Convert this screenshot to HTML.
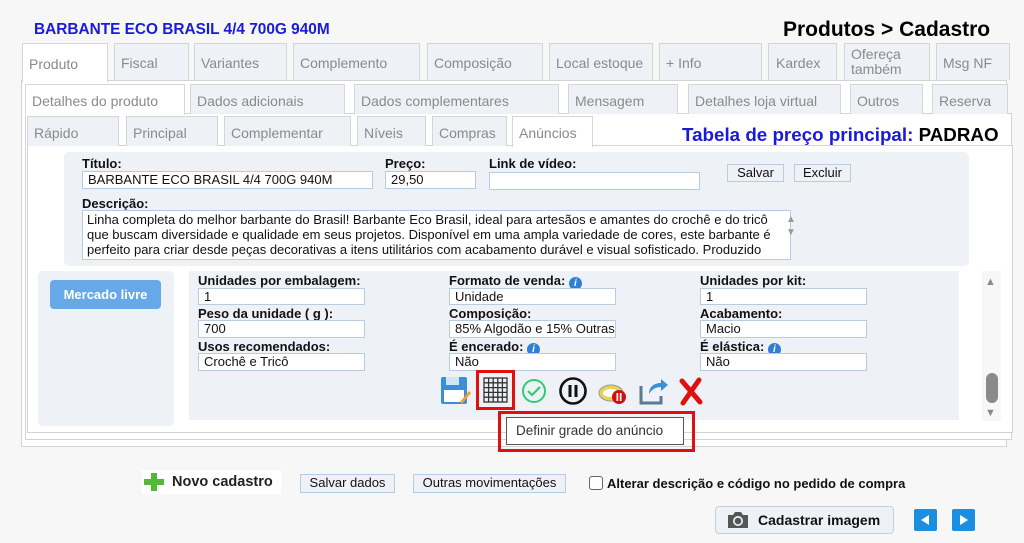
<!DOCTYPE html>
<html><head><meta charset="utf-8"><style>
*{box-sizing:border-box;margin:0;padding:0}
body{width:1024px;height:543px;background:#f7f7f7;font-family:"Liberation Sans",Arial,sans-serif;position:relative;overflow:hidden;font-size:13px;color:#000}
.a{position:absolute}
.tab{position:absolute;border:1px solid #d6d6d6;border-bottom:none;background:#eef1f6;color:#8a8a8a;font-size:14px;padding-left:6px;padding-top:2px;display:flex;align-items:center}
.tab.on{background:#fff}
.box{position:absolute;border:1px solid #d3d3d3;background:#fff}
.lbl{position:absolute;font-weight:bold;font-size:13px;color:#111}
.inp{position:absolute;background:#fff;border:1px solid #b9cbe0;font-size:13px;padding-left:5px;line-height:15px;color:#111;white-space:nowrap;overflow:hidden}
.btn{position:absolute;background:#eef1f6;border:1px solid #b9cbe0;font-size:13px;text-align:center;line-height:16px;color:#111}
</style></head><body>
<div class="a" style="left:34px;top:21px;color:#1a1adb;font-weight:bold;font-size:15.4px">BARBANTE ECO BRASIL 4/4 700G 940M</div>
<div class="a" style="left:783px;top:18px;font-weight:bold;font-size:21px">Produtos &gt; Cadastro</div>

<div class="box" style="left:21px;top:80px;width:986px;height:367px"></div>
<div class="box" style="left:25px;top:113px;width:987px;height:327px"></div>
<div class="box" style="left:27px;top:145px;width:986px;height:288px"></div>

<div class="tab on" style="left:22px;top:43px;width:86px;height:39px">Produto</div>
<div class="tab" style="left:114px;top:43px;width:75px;height:37px">Fiscal</div>
<div class="tab" style="left:194px;top:43px;width:93px;height:37px">Variantes</div>
<div class="tab" style="left:293px;top:43px;width:127px;height:37px">Complemento</div>
<div class="tab" style="left:427px;top:43px;width:116px;height:37px">Composição</div>
<div class="tab" style="left:549px;top:43px;width:104px;height:37px">Local estoque</div>
<div class="tab" style="left:659px;top:43px;width:103px;height:37px">+ Info</div>
<div class="tab" style="left:768px;top:43px;width:69px;height:37px;padding-left:7px">Kardex</div>
<div class="tab" style="left:844px;top:43px;width:86px;height:37px;line-height:15px;padding-top:0">Ofereça<br>também</div>
<div class="tab" style="left:936px;top:43px;width:74px;height:37px">Msg NF</div>

<div class="tab on" style="left:25px;top:84px;width:160px;height:31px">Detalhes do produto</div>
<div class="tab" style="left:190px;top:84px;width:155px;height:30px">Dados adicionais</div>
<div class="tab" style="left:354px;top:84px;width:205px;height:30px">Dados complementares</div>
<div class="tab" style="left:568px;top:84px;width:110px;height:30px">Mensagem</div>
<div class="tab" style="left:688px;top:84px;width:153px;height:30px">Detalhes loja virtual</div>
<div class="tab" style="left:850px;top:84px;width:73px;height:30px">Outros</div>
<div class="tab" style="left:932px;top:84px;width:76px;height:30px">Reserva</div>

<div class="tab" style="left:27px;top:116px;width:92px;height:30px">Rápido</div>
<div class="tab" style="left:126px;top:116px;width:92px;height:30px">Principal</div>
<div class="tab" style="left:224px;top:116px;width:127px;height:30px">Complementar</div>
<div class="tab" style="left:357px;top:116px;width:69px;height:30px">Níveis</div>
<div class="tab" style="left:432px;top:116px;width:75px;height:30px">Compras</div>
<div class="tab on" style="left:512px;top:116px;width:81px;height:31px">Anúncios</div>
<div class="a" style="left:682px;top:124px;font-weight:bold;font-size:18.8px;color:#1a1adb">Tabela de preço principal: <span style="color:#000">PADRAO</span></div>

<div class="a" style="left:64px;top:152px;width:905px;height:114px;background:#eef1f6;border-radius:5px"></div>
<div class="lbl" style="left:82px;top:156px">Título:</div>
<div class="inp" style="left:82px;top:171px;width:291px;height:18px">BARBANTE ECO BRASIL 4/4 700G 940M</div>
<div class="lbl" style="left:385px;top:156px">Preço:</div>
<div class="inp" style="left:385px;top:171px;width:91px;height:18px">29,50</div>
<div class="lbl" style="left:489px;top:156px">Link de vídeo:</div>
<div class="inp" style="left:489px;top:172px;width:211px;height:18px"></div>
<div class="btn" style="left:727px;top:164px;width:57px;height:18px">Salvar</div>
<div class="btn" style="left:794px;top:164px;width:57px;height:18px">Excluir</div>
<div class="lbl" style="left:82px;top:196px">Descrição:</div>
<div class="inp" style="left:82px;top:210px;width:709px;height:50px;white-space:normal;line-height:15px;padding:1px 18px 0 4px;font-size:13px">Linha completa do melhor barbante do Brasil! Barbante Eco Brasil, ideal para artesãos e amantes do crochê e do tricô que buscam diversidade e qualidade em seus projetos. Disponível em uma ampla variedade de cores, este barbante é perfeito para criar desde peças decorativas a itens utilitários com acabamento durável e visual sofisticado. Produzido</div>
<div class="a" style="left:786px;top:213px;color:#999;font-size:10px;line-height:13px">▲<br>▼</div>

<div class="a" style="left:38px;top:271px;width:136px;height:155px;background:#eef1f6;border-radius:5px"></div>
<div class="a" style="left:50px;top:280px;width:111px;height:29px;background:#67a9e8;border-radius:4px;color:#fff;font-weight:bold;font-size:13px;text-align:center;line-height:29px">Mercado livre</div>

<div class="a" style="left:189px;top:271px;width:770px;height:149px;background:#eef1f6"></div>
<div class="lbl" style="left:198px;top:273px">Unidades por embalagem:</div>
<div class="inp" style="left:198px;top:288px;width:167px;height:17px">1</div>
<div class="lbl" style="left:198px;top:306px">Peso da unidade ( g ):</div>
<div class="inp" style="left:198px;top:320px;width:167px;height:18px">700</div>
<div class="lbl" style="left:198px;top:339px">Usos recomendados:</div>
<div class="inp" style="left:198px;top:353px;width:167px;height:18px">Crochê e Tricô</div>

<div class="lbl" style="left:449px;top:273px">Formato de venda: <span style="display:inline-block;width:13px;height:13px;border-radius:50%;background:#2f7fd6;color:#fff;font-size:10px;text-align:center;line-height:13px;font-style:italic;vertical-align:-1px">i</span></div>
<div class="inp" style="left:449px;top:288px;width:167px;height:17px">Unidade</div>
<div class="lbl" style="left:449px;top:306px">Composição:</div>
<div class="inp" style="left:449px;top:320px;width:167px;height:18px">85% Algodão e 15% Outras</div>
<div class="lbl" style="left:449px;top:339px">É encerado: <span style="display:inline-block;width:13px;height:13px;border-radius:50%;background:#2f7fd6;color:#fff;font-size:10px;text-align:center;line-height:13px;font-style:italic;vertical-align:-1px">i</span></div>
<div class="inp" style="left:449px;top:353px;width:167px;height:18px">Não</div>

<div class="lbl" style="left:700px;top:273px">Unidades por kit:</div>
<div class="inp" style="left:700px;top:288px;width:167px;height:17px">1</div>
<div class="lbl" style="left:700px;top:306px">Acabamento:</div>
<div class="inp" style="left:700px;top:320px;width:167px;height:18px">Macio</div>
<div class="lbl" style="left:700px;top:339px">É elástica: <span style="display:inline-block;width:13px;height:13px;border-radius:50%;background:#2f7fd6;color:#fff;font-size:10px;text-align:center;line-height:13px;font-style:italic;vertical-align:-1px">i</span></div>
<div class="inp" style="left:700px;top:353px;width:167px;height:18px">Não</div>

<svg class="a" style="left:440px;top:376px" width="32" height="30" viewBox="0 0 32 30"><rect x="1" y="1" width="26" height="27" rx="2" fill="#3a8fd6"/><rect x="6" y="1" width="13" height="8" fill="#cfe6f7"/><rect x="4" y="14" width="20" height="12" fill="#fff"/><path d="M20 26 L29 15 L31 17 L22 28 Z" fill="#f0a030"/></svg>
<div class="a" style="left:476px;top:370px;width:39px;height:40px;border:3px solid #e01010"></div>
<svg class="a" style="left:483px;top:377px" width="25" height="26" viewBox="0 0 25 26"><g stroke="#333" stroke-width="1.3" fill="none"><rect x="1" y="1" width="23" height="24"/><path d="M5.6 1V25M10.2 1V25M14.8 1V25M19.4 1V25M1 5.8H24M1 10.6H24M1 15.4H24M1 20.2H24"/></g></svg>
<svg class="a" style="left:520px;top:376px" width="28" height="30" viewBox="0 0 28 30"><circle cx="14" cy="15" r="11" fill="none" stroke="#2ecc71" stroke-width="2"/><path d="M8 15l4 4 8-8" fill="none" stroke="#2ecc71" stroke-width="2.2"/></svg>
<svg class="a" style="left:558px;top:376px" width="30" height="30" viewBox="0 0 30 30"><circle cx="15" cy="15" r="12.5" fill="none" stroke="#111" stroke-width="2.6"/><rect x="10.5" y="9" width="3" height="12" fill="#111"/><rect x="16.5" y="9" width="3" height="12" fill="#111"/></svg>
<svg class="a" style="left:598px;top:379px" width="30" height="28" viewBox="0 0 30 28"><ellipse cx="13" cy="14" rx="12" ry="8" fill="#e8d35a" stroke="#999"/><ellipse cx="13" cy="14" rx="8" ry="4" fill="#fff"/><circle cx="21" cy="18" r="7" fill="#d01010"/><rect x="18.5" y="14" width="1.7" height="8" fill="#fff"/><rect x="21.8" y="14" width="1.7" height="8" fill="#fff"/></svg>
<svg class="a" style="left:637px;top:376px" width="32" height="30" viewBox="0 0 32 30"><path d="M4 10V27H24V20" fill="none" stroke="#5a7a90" stroke-width="3"/><path d="M12 18C12 10 18 7 24 7V3L31 9L24 15V11C19 11 15 13 12 18Z" fill="#3a8fd6"/></svg>
<svg class="a" style="left:677px;top:376px" width="28" height="30" viewBox="0 0 28 30"><path d="M5 5L23 26M22 4L6 27" stroke="#e01010" stroke-width="5" stroke-linecap="round"/></svg>

<div class="a" style="left:498px;top:411px;width:197px;height:41px;border:3px solid #e01010"></div>
<div class="a" style="left:506px;top:417px;width:178px;height:28px;background:#fff;border:1px solid #555;font-size:13.5px;line-height:26px;padding-left:9px;color:#333">Definir grade do anúncio</div>

<div class="a" style="left:982px;top:271px;width:19px;height:150px;background:#f7f7f7"></div>
<div class="a" style="left:985px;top:276px;color:#888;font-size:11px">▲</div>
<div class="a" style="left:985px;top:407px;color:#888;font-size:11px">▼</div>
<div class="a" style="left:986px;top:373px;width:12px;height:30px;background:#8a8a8a;border-radius:6px"></div>

<div class="a" style="left:142px;top:470px;width:139px;height:24px;background:#fff"></div>
<div class="a" style="left:144px;top:473px;width:20px;height:18px"><div class="a" style="left:7px;top:0;width:6px;height:18px;background:#53b83a"></div><div class="a" style="left:0;top:6px;width:20px;height:6px;background:#53b83a"></div></div>
<div class="a" style="left:172px;top:474px;font-weight:bold;font-size:14.5px;color:#222">Novo cadastro</div>
<div class="btn" style="left:300px;top:474px;width:95px;height:19px">Salvar dados</div>
<div class="btn" style="left:413px;top:474px;width:153px;height:19px">Outras movimentações</div>
<div class="a" style="left:589px;top:476px;width:14px;height:14px;border:1.5px solid #666;border-radius:3px;background:#fff"></div>
<div class="a" style="left:607px;top:476px;font-weight:bold;font-size:13px;color:#111">Alterar descrição e código no pedido de compra</div>
<div class="a" style="left:715px;top:506px;width:179px;height:28px;background:#eef1f6;border:1px solid #c5cfdb;border-radius:4px"></div>
<svg class="a" style="left:726px;top:511px" width="24" height="18" viewBox="0 0 24 18"><path d="M2 4H7L9 1H15L17 4H22V17H2Z" fill="#555"/><circle cx="12" cy="10" r="5" fill="#eef1f6"/><circle cx="12" cy="10" r="3.3" fill="#555"/></svg>
<div class="a" style="left:758px;top:512px;font-weight:bold;font-size:14px;color:#111">Cadastrar imagem</div>
<div class="a" style="left:914px;top:509px;width:23px;height:22px;background:#1a8ee0;border-radius:2px"><div class="a" style="left:7px;top:6px;border-right:8px solid #fff;border-top:5px solid transparent;border-bottom:5px solid transparent"></div></div>
<div class="a" style="left:952px;top:509px;width:23px;height:22px;background:#1a8ee0;border-radius:2px"><div class="a" style="left:8px;top:6px;border-left:8px solid #fff;border-top:5px solid transparent;border-bottom:5px solid transparent"></div></div>
</body></html>
